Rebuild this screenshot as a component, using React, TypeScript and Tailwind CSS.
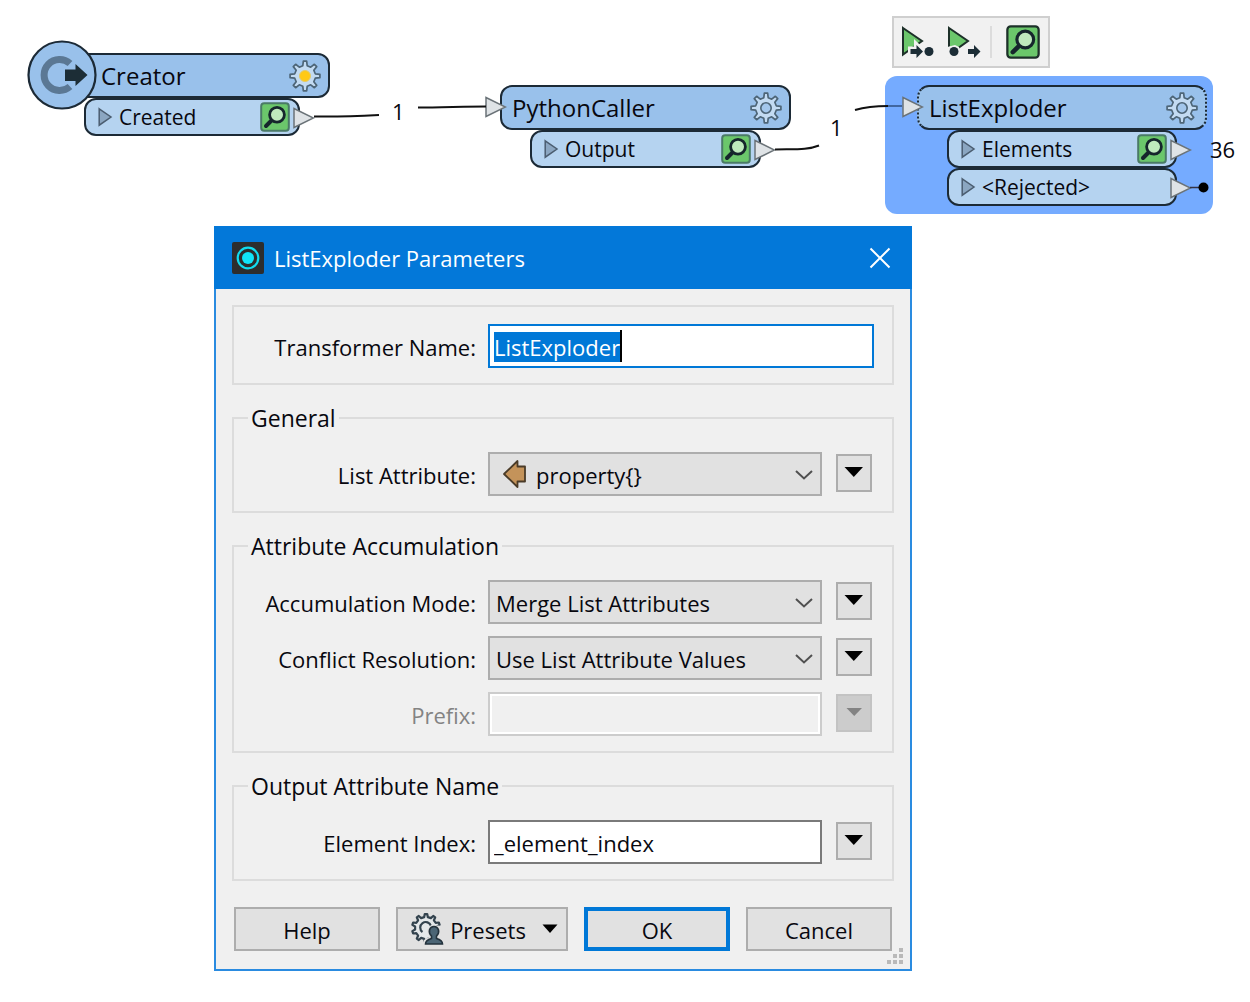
import { useEffect, useRef, useState } from "react";
import type { ReactNode } from "react";

function gearPath(cx: number, cy: number, outer: number, inner: number, teeth: number) {
  const pts: string[] = [];
  const step = (Math.PI * 2) / teeth;
  for (let i = 0; i < teeth; i++) {
    const mid = i * step - Math.PI / 2;
    const corners: [number, number][] = [
      [inner, -0.27],
      [outer, -0.14],
      [outer, 0.14],
      [inner, 0.27],
    ];
    corners.forEach(([r, f]) => {
      const a = mid + f * step;
      pts.push(`${(cx + r * Math.cos(a)).toFixed(2)} ${(cy + r * Math.sin(a)).toFixed(2)}`);
    });
  }
  return `M${pts.join("L")}Z`;
}

function NodeGear({ active = false }: { active?: boolean }) {
  return (
    <svg width="34" height="34" viewBox="0 0 34 34" className="shrink-0" aria-hidden="true">
      <path
        d={gearPath(17, 17, 15, 10.5, 8)}
        fill="#c3dbf2"
        stroke="#4d6577"
        strokeWidth="1.7"
        strokeLinejoin="round"
      />
      {active ? (
        <circle cx="17" cy="17" r="5.5" fill="#ffc916" stroke="#e3ca6b" strokeWidth="1" />
      ) : (
        <circle cx="17" cy="17" r="5.2" fill="#a3c7ec" stroke="#4d6577" strokeWidth="1.6" />
      )}
    </svg>
  );
}

function Magnifier({ large = false }: { large?: boolean }) {
  return (
    <svg
      width={large ? 34 : 30}
      height={large ? 34 : 30}
      viewBox="0 0 30 30"
      className="shrink-0"
      aria-hidden="true"
    >
      <rect
        x="1.2"
        y="1.2"
        width="27.6"
        height="27.6"
        rx="3"
        fill="#6bc76b"
        stroke={large ? "#1d3029" : "#4a7a66"}
        strokeWidth="2"
      />
      <path d="M12 18L6 24" stroke="#16262c" strokeWidth="4" strokeLinecap="round" />
      <circle cx="17" cy="12.8" r="7.4" fill="#bfeabd" stroke="#16262c" strokeWidth="2.8" />
    </svg>
  );
}

function PortTriangle({ className }: { className: string }) {
  return (
    <svg width="22" height="22" viewBox="0 0 22 22" className={className} aria-hidden="true">
      <path d="M1 1.5L20.5 11L1 20.5Z" fill="#dfe3e6" stroke="#6b7378" strokeWidth="1.5" />
    </svg>
  );
}

function Port({ label, inspect = true }: { label: string; inspect?: boolean }) {
  return (
    <div className="relative flex h-[38px] items-center rounded-xl border-2 border-[#1c2a36] bg-[#b5d3f0] pl-3 pr-2">
      <svg width="15" height="20" viewBox="0 0 15 20" className="shrink-0" aria-hidden="true">
        <path d="M1.2 1.8L13 10L1.2 18.2Z" fill="#8ba6c1" stroke="#4b5d70" strokeWidth="1.5" />
      </svg>
      <span className="ml-1.5 flex-1 whitespace-nowrap text-[21px] leading-7">{label}</span>
      {inspect && (
        <button type="button" aria-label={`Inspect ${label}`}>
          <Magnifier />
        </button>
      )}
      <PortTriangle className="absolute -right-[17px] top-[7px]" />
    </div>
  );
}

function TransformerNode({
  title,
  active,
  selected,
  source,
  children,
}: {
  title: string;
  active?: boolean;
  selected?: boolean;
  source?: boolean;
  children: ReactNode;
}) {
  return (
    <div>
      <div
        className={`relative flex h-[45px] items-center justify-between rounded-xl border-2 border-[#1c2a36] bg-[#99c1eb] pr-1.5 ${
          source ? "pl-[37px]" : "pl-2.5"
        } ${selected ? "[border-style:solid_dotted]" : ""}`}
      >
        <span className="text-[24px] leading-8">{title}</span>
        <NodeGear active={active} />
        {!source && <PortTriangle className="absolute -left-[17px] top-[9px]" />}
      </div>
      <div className={source ? "ml-[22px] mr-[30px]" : "mx-[30px]"}>{children}</div>
    </div>
  );
}

function Canvas() {
  return (
    <section className="relative h-[226px]" aria-label="Workspace canvas">
      <div className="absolute left-[62px] top-[53px] w-[268px]">
        <TransformerNode title="Creator" active source>
          <Port label="Created" />
        </TransformerNode>
      </div>
      <svg
        width="70"
        height="70"
        viewBox="0 0 70 70"
        className="absolute left-[27px] top-[40px]"
        aria-hidden="true"
      >
        <circle cx="35" cy="35" r="33.5" fill="#99c1eb" stroke="#1c2a36" strokeWidth="2.2" />
        <path d="M43 23.5A15.5 15.5 0 1 0 43 46.5" fill="none" stroke="#5b7894" strokeWidth="7" />
        <path d="M38 29.5H48.5V24L60.5 35L48.5 46V41H38Z" fill="#1c2d36" />
      </svg>
      <div className="absolute left-[500px] top-[85px] w-[291px]">
        <TransformerNode title="PythonCaller">
          <Port label="Output" />
        </TransformerNode>
      </div>
      <div className="absolute left-[885px] top-[76px] w-[328px] rounded-xl bg-[#75abff] pb-2 pl-8 pr-1.5 pt-[9px]">
        <TransformerNode title="ListExploder" selected>
          <Port label="Elements" />
          <Port label="<Rejected>" inspect={false} />
        </TransformerNode>
      </div>
      <svg
        width="1250"
        height="226"
        viewBox="0 0 1250 226"
        fill="none"
        stroke="#111"
        strokeWidth="2"
        className="pointer-events-none absolute left-0 top-0"
        aria-hidden="true"
      >
        <path d="M314 116.500C340 117 360 116 379 115" />
        <path d="M418 107.500C440 107.500 465 106.500 486 106.500" />
        <path d="M775 149.500C795 149 808 150 819 145.500" />
        <path d="M855 110C867 106.500 876 106 888 106" />
        <path d="M888 106H902" stroke="#2f4f80" strokeWidth="1.500" />
        <path d="M1190 187.500H1203" stroke="#334" strokeWidth="1.500" />
        <circle cx="1203.500" cy="187.500" r="5" fill="#000" stroke="none" />
      </svg>
      <span className="absolute left-[392px] top-[97px] text-[22px] leading-7">1</span>
      <span className="absolute left-[830px] top-[113px] text-[22px] leading-7">1</span>
      <span className="absolute left-[1210px] top-[135px] text-[22px] leading-7">36</span>
      <div
        role="toolbar"
        aria-label="Run options"
        className="absolute left-[892px] top-[16px] flex h-[52px] w-[158px] items-center border-2 border-[#cfcfcf] bg-[#f1f1f1] pl-1.5 pr-2"
      >
        <button type="button" aria-label="Run to this">
          <svg width="36" height="36" viewBox="0 0 36 36">
            <path d="M3 4L22 17L3 30.500Z" fill="#6bc76b" stroke="#1d3029" strokeWidth="2" />
            <path
              d="M10.500 25H16.500V21L23 27.500L16.500 34V30H10.500Z"
              fill="#f1f1f1"
              stroke="#f1f1f1"
              strokeWidth="5"
            />
            <path d="M10.500 25H16.500V21L23 27.500L16.500 34V30H10.500Z" fill="#1c2d36" />
            <circle cx="29" cy="27.500" r="4.500" fill="#1c2d36" />
          </svg>
        </button>
        <button type="button" aria-label="Run from this" className="ml-2.5">
          <svg width="36" height="36" viewBox="0 0 36 36">
            <path d="M3 4L22 17L3 30.500Z" fill="#6bc76b" stroke="#1d3029" strokeWidth="2" />
            <path d="M0 24L3 22.500L9 21L13 23L15 30L0 34Z" fill="#f1f1f1" />
            <circle cx="8" cy="27.500" r="4.500" fill="#1c2d36" />
            <path d="M22 25H28V21L34.500 27.500L28 34V30H22Z" fill="#1c2d36" />
          </svg>
        </button>
        <span className="ml-2 h-8 w-0.5 bg-[#dcdcdc]" />
        <button type="button" aria-label="Inspect cached features" className="ml-auto">
          <Magnifier large />
        </button>
      </div>
    </section>
  );
}

function Group({ legend, children }: { legend?: string; children: ReactNode }) {
  return (
    <fieldset
      className={`flex min-w-0 flex-col border-2 border-[#dcdcdc] pb-[15px] pr-[18px] ${
        legend ? "pt-[18px]" : "pt-[17px]"
      }`}
    >
      {legend && <legend className="ml-3.5 px-[3px] text-[23px] leading-8">{legend}</legend>}
      <div className="flex flex-col gap-3">{children}</div>
    </fieldset>
  );
}

function Row({
  id,
  label,
  disabled,
  menu = true,
  children,
}: {
  id: string;
  label: string;
  disabled?: boolean;
  menu?: boolean;
  children: ReactNode;
}) {
  return (
    <div className="flex h-11">
      <label
        htmlFor={id}
        className={`w-[242px] shrink-0 whitespace-nowrap text-right leading-[46px] ${
          disabled ? "text-[#838383]" : ""
        }`}
      >
        {label}
      </label>
      <div className="relative ml-3 min-w-0 flex-1">{children}</div>
      {menu && (
        <button
          type="button"
          disabled={disabled}
          aria-label={`${label} options`}
          className={`ml-3.5 mr-0.5 mt-0.5 flex h-[38px] w-9 shrink-0 justify-center border-2 pt-2.5 ${
            disabled ? "border-[#c3c3c3] bg-[#cccccc]" : "border-[#adadad] bg-[#e1e1e1]"
          }`}
        >
          <svg width="20" height="12" viewBox="0 0 20 12" aria-hidden="true">
            {disabled ? (
              <path d="M2.500 2H18L10.200 10Z" fill="#838383" />
            ) : (
              <path d="M0.500 1H19L9.800 11Z" fill="#000" />
            )}
          </svg>
        </button>
      )}
    </div>
  );
}

function Dropdown({ id, value, icon }: { id: string; value: string; icon?: ReactNode }) {
  return (
    <>
      <select
        id={id}
        defaultValue={value}
        className={`h-11 w-full appearance-none border-2 border-[#adadad] bg-[#e1e1e1] pr-9 pt-0.5 ${
          icon ? "pl-[46px]" : "pl-1.5"
        }`}
      >
        <option>{value}</option>
      </select>
      {icon && <span className="pointer-events-none absolute left-3.5 top-1.5">{icon}</span>}
      <svg
        width="20"
        height="12"
        viewBox="0 0 20 12"
        className="pointer-events-none absolute right-2 top-[17px]"
        aria-hidden="true"
      >
        <path d="M2 2L10 9.500L18 2" fill="none" stroke="#505050" strokeWidth="2" />
      </svg>
    </>
  );
}

function NameField({ id }: { id: string }) {
  const ref = useRef<HTMLInputElement>(null);
  const [name, setName] = useState("ListExploder");
  useEffect(() => {
    ref.current?.focus();
    ref.current?.select();
  }, []);
  return (
    <>
      <input
        id={id}
        ref={ref}
        type="text"
        value={name}
        onChange={(e) => setName(e.target.value)}
        className="h-11 w-full border-2 border-[#0078d7] bg-white pl-1 pt-0.5 outline-none selection:bg-[#0078d7] selection:text-white"
      />
      <span className="pointer-events-none absolute left-1.5 top-1.5 flex h-8" aria-hidden="true">
        <span className="invisible">{name}</span>
        <span className="w-0.5 bg-black" />
      </span>
    </>
  );
}

function AttributeArrow() {
  return (
    <svg width="26" height="32" viewBox="0 0 26 32" aria-hidden="true">
      <path
        d="M2 16L15.500 3V8.500H23V23.500H15.500V29Z"
        fill="#c4935a"
        stroke="#4a3b28"
        strokeWidth="1.800"
        strokeLinejoin="round"
      />
    </svg>
  );
}

function PresetsIcon() {
  return (
    <svg width="34" height="34" viewBox="0 0 34 34" aria-hidden="true">
      <path
        d={gearPath(16, 16, 14, 11, 10)}
        fill="#e4e8ea"
        stroke="#33434e"
        strokeWidth="2.200"
        strokeLinejoin="round"
      />
      <path d="M12.500 20A5.500 5.500 0 1 1 21 14" fill="none" stroke="#33434e" strokeWidth="2.200" />
      <path d="M12 34L14 28L19 25L17 18L21 13L34 14V34Z" fill="#e1e1e1" />
      <path
        d="M15.500 32C15.500 28.500 18 27.500 21.500 26.500V24C17.500 20 19.500 14.500 24 14.500S30.500 20 26.500 24V26.500C30 27.500 32.500 28.500 32.500 32Z"
        fill="#4b6575"
        stroke="#23323c"
        strokeWidth="1.600"
      />
    </svg>
  );
}

function Dialog() {
  return (
    <div
      role="dialog"
      aria-label="ListExploder Parameters"
      className="relative ml-[214px] w-full max-w-[698px] border-2 border-[#2a8be0] bg-[#f0f0f0]"
    >
      <header className="-mx-0.5 -mt-0.5 flex h-[63px] items-center bg-[#0378d9] pl-[18px] pr-[21px] text-white">
        <svg width="32" height="32" viewBox="0 0 32 32" className="shrink-0" aria-hidden="true">
          <rect width="32" height="32" rx="2" fill="#2d2d2d" />
          <circle cx="16" cy="16" r="10.300" fill="none" stroke="#10dcf0" strokeWidth="2.200" />
          <circle cx="16" cy="16" r="6" fill="#10e4f8" />
        </svg>
        <h1 className="ml-2.5 flex-1">ListExploder Parameters</h1>
        <button type="button" aria-label="Close">
          <svg width="22" height="22" viewBox="0 0 22 22">
            <path d="M1.500 1.500L20.500 20.500M20.500 1.500L1.500 20.500" stroke="#fff" strokeWidth="2" />
          </svg>
        </button>
      </header>
      <form className="px-4 pb-[18px] pt-4" onSubmit={(e) => e.preventDefault()}>
        <div className="flex flex-col gap-[17px]">
          <Group>
            <Row id="name" label="Transformer Name:" menu={false}>
              <NameField id="name" />
            </Row>
          </Group>
          <Group legend="General">
            <Row id="list" label="List Attribute:">
              <Dropdown id="list" value="property{}" icon={<AttributeArrow />} />
            </Row>
          </Group>
          <Group legend="Attribute Accumulation">
            <Row id="mode" label="Accumulation Mode:">
              <Dropdown id="mode" value="Merge List Attributes" />
            </Row>
            <Row id="conflict" label="Conflict Resolution:">
              <Dropdown id="conflict" value="Use List Attribute Values" />
            </Row>
            <Row id="prefix" label="Prefix:" disabled>
              <input
                id="prefix"
                type="text"
                disabled
                className="h-11 w-full border-2 border-[#cccccc] bg-[#f0f0f0] outline-2 -outline-offset-4 outline-white"
              />
            </Row>
          </Group>
          <Group legend="Output Attribute Name">
            <Row id="index" label="Element Index:">
              <input
                id="index"
                type="text"
                defaultValue="_element_index"
                className="h-11 w-full border-2 border-[#7a7a7a] bg-white pl-1 pt-0.5 outline-none"
              />
            </Row>
          </Group>
        </div>
        <div className="mt-[26px] grid grid-cols-[1fr_172px_1fr_1fr] gap-4 px-0.5">
          <button type="button" className="h-11 border-2 border-[#adadad] bg-[#e1e1e1] pt-0.5">
            Help
          </button>
          <button
            type="button"
            className="flex h-11 items-center justify-between border-2 border-[#adadad] bg-[#e1e1e1] pl-3 pr-2"
          >
            <PresetsIcon />
            <span className="pt-0.5">Presets</span>
            <svg width="16" height="10" viewBox="0 0 16 10" className="ml-2.5" aria-hidden="true">
              <path d="M0.500 0.500H15.500L8 9Z" fill="#000" />
            </svg>
          </button>
          <button type="submit" className="h-11 border-4 border-[#0078d7] bg-[#e1e1e1] pt-0.5">
            OK
          </button>
          <button type="button" className="h-11 border-2 border-[#adadad] bg-[#e1e1e1] pt-0.5">
            Cancel
          </button>
        </div>
      </form>
      <svg
        width="18"
        height="18"
        viewBox="0 0 18 18"
        fill="#b9b9b9"
        className="absolute bottom-1 right-1.5"
        aria-hidden="true"
      >
        <rect x="13" y="1" width="4" height="4" />
        <rect x="7" y="7" width="4" height="4" />
        <rect x="13" y="7" width="4" height="4" />
        <rect x="1" y="13" width="4" height="4" />
        <rect x="7" y="13" width="4" height="4" />
        <rect x="13" y="13" width="4" height="4" />
      </svg>
    </div>
  );
}

export default function App() {
  return (
    <main className="min-h-screen overflow-x-hidden bg-white pb-[30px] font-['Open_Sans','Noto_Sans',sans-serif] text-[22px] leading-8 text-[#08080f]">
      <Canvas />
      <Dialog />
    </main>
  );
}
